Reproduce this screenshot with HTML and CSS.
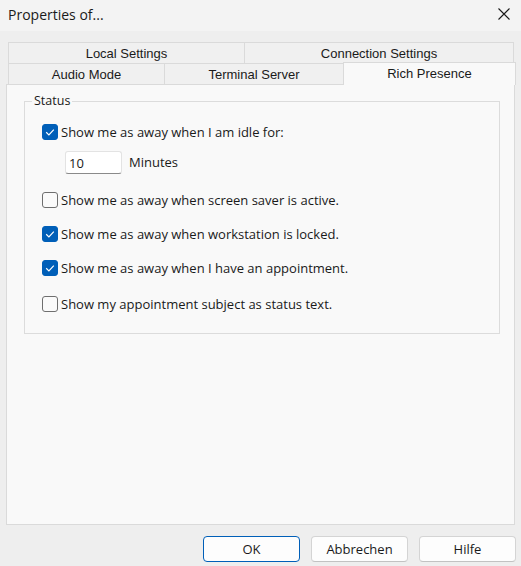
FILE: index.html
```html
<!DOCTYPE html>
<html lang="en">
<head>
  <meta charset="UTF-8" />
  <title>Properties of...</title>
  <link rel="stylesheet" href="styles.css">
</head>
<body>
  <div class="window">

    <div class="titlebar">
      <span class="title">Properties of...</span>
      <svg class="close" width="12" height="12" viewBox="0 0 12 12">
        <path d="M0.5 0.5 L11.5 11.5 M11.5 0.5 L0.5 11.5" stroke="#1a1a1a" stroke-width="1.1" fill="none"/>
      </svg>
    </div>

    <!-- two rows of tabs, the active one sits on the panel -->
    <div class="tabs">
      <div class="tab-row">
        <div class="tab w-local">Local Settings</div>
        <div class="tab w-conn">Connection Settings</div>
      </div>
      <div class="tab-row front">
        <div class="tab w-audio">Audio Mode</div>
        <div class="tab w-term">Terminal Server</div>
        <div class="tab w-rich active">Rich Presence</div>
      </div>
    </div>

    <div class="panel">
      <fieldset class="group">
        <legend>Status</legend>

        <label class="row r1">
          <span class="check on"><svg width="16" height="16" viewBox="0 0 16 16"><path d="M4.2 8.3 L6.9 10.9 L11.8 5.6" stroke="#fff" stroke-width="1.2" fill="none"/></svg></span>
          Show me as away when I am idle for:
        </label>

        <div class="row r2">
          <span class="textbox">10</span>
          <span class="unit">Minutes</span>
        </div>

        <label class="row r3">
          <span class="check"></span>
          Show me as away when screen saver is active.
        </label>

        <label class="row r4">
          <span class="check on"><svg width="16" height="16" viewBox="0 0 16 16"><path d="M4.2 8.3 L6.9 10.9 L11.8 5.6" stroke="#fff" stroke-width="1.2" fill="none"/></svg></span>
          Show me as away when workstation is locked.
        </label>

        <label class="row r5">
          <span class="check on"><svg width="16" height="16" viewBox="0 0 16 16"><path d="M4.2 8.3 L6.9 10.9 L11.8 5.6" stroke="#fff" stroke-width="1.2" fill="none"/></svg></span>
          Show me as away when I have an appointment.
        </label>

        <label class="row r6">
          <span class="check"></span>
          Show my appointment subject as status text.
        </label>
      </fieldset>
    </div>

    <div class="buttons">
      <button class="btn default">OK</button>
      <button class="btn">Abbrechen</button>
      <button class="btn">Hilfe</button>
    </div>

  </div>
</body>
</html>
```

FILE: styles.css
```css
*{box-sizing:border-box}
body{margin:0;background:#eeeeee;font-family:"Liberation Sans",Arial,sans-serif;color:#1a1a1a}
.window{width:521px;height:566px;background:#eeeeee}

.titlebar{height:31px;background:#f3f3f3;display:flex;align-items:center;justify-content:space-between;padding:0 11px 3px 8px}
.title{font-family:"Open Sans","Noto Sans",sans-serif;font-size:14px;color:#1a1a1a}
.close{display:block}

.tabs{padding-top:11px;padding-left:8px;font-size:13px}
.tab-row{display:flex;height:22px}
.tab-row + .tab-row{margin-top:-1px}
.tab-row.front{position:relative;z-index:1}
.tab{height:22px;border:1px solid #dadada;background:#f0f0f0;display:flex;align-items:center;justify-content:center;padding-top:1px;color:#1a1a1a}
.tab + .tab{margin-left:-1px}
.w-local{width:237px}
.w-conn{width:270px}
.w-audio{width:157px}
.w-term{width:180px}
.w-rich{width:173px}
.tab.active{height:23px;margin-top:-1px;border-bottom:none;background:#f9f9f9;padding-top:0;padding-bottom:2px}

.panel{margin:-1px 0 0 6px;width:509px;height:441px;border:1px solid #dadada;background:#f9f9f9;padding-top:8px}

.group{margin:0 14px 0 17px;padding:0 0 17px 0;border:1px solid #dcdcdc;font-size:13px;display:flex;flex-direction:column;min-width:0}
.group legend{font-family:"Open Sans","Noto Sans",sans-serif;font-size:12.5px;line-height:16px;padding:0 2px;margin-left:7px}

.row{display:flex;align-items:center;height:24px;padding-left:17px;font-family:"Open Sans","Noto Sans",sans-serif;font-size:13px;white-space:nowrap}
.r1{margin-top:11px}
.r2{margin-top:6px}
.r3{margin-top:14px}
.r4{margin-top:10px}
.r5{margin-top:10px}
.r6{margin-top:12px}

.check{width:16px;height:16px;border:1px solid #6f6f6f;border-radius:3px;background:#fbfbfb;margin-right:3px;flex:none}
.check svg{display:block}
.check.on{background:#005fb8;border-color:#005fb8}
.check.on svg{margin:-1px}

.textbox{width:57px;height:23px;margin-left:23px;background:#fff;border:1px solid #e3e3e3;border-bottom-color:#8a8a8a;border-radius:3px;padding:2px 0 0 3px;font-size:13px}
.unit{margin-left:7px}

.buttons{display:flex;justify-content:flex-end;gap:11px;padding:11px 5px 0 0}
.btn{width:97px;height:26px;background:#fdfdfd;border:1px solid #d4d4d4;border-bottom-color:#c2c2c2;border-radius:4px;font-family:"Open Sans","Noto Sans",sans-serif;font-size:13px;color:#1a1a1a;padding:0}
.btn.default{border-color:#005fb8}
```
